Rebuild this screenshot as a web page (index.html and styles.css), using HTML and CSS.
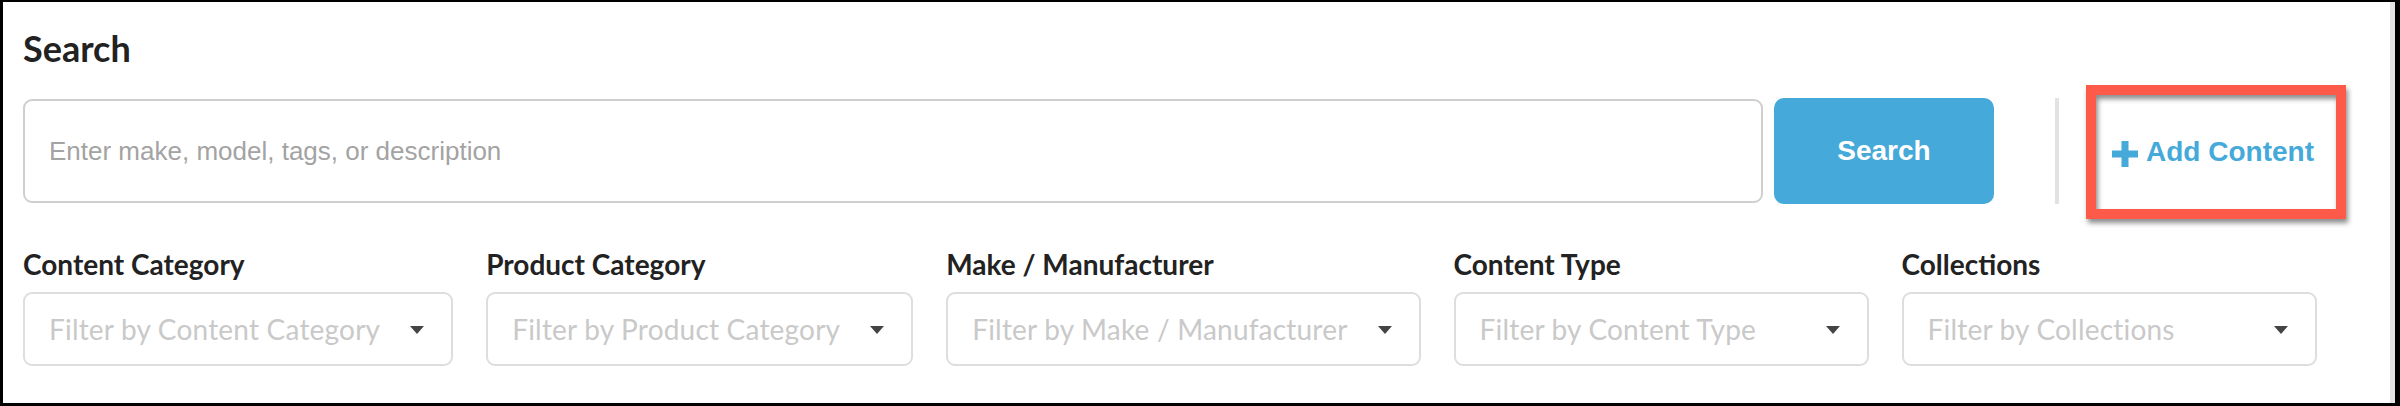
FILE: index.html
```html
<!DOCTYPE html>
<html lang="en">
<head>
  <meta charset="UTF-8" />
  <meta name="viewport" content="width=device-width, initial-scale=1.0" />
  <title>Search</title>
  <link rel="stylesheet" href="styles.css">
</head>
<body>
  <div class="frame">
    <div class="panel">
      <h1>Search</h1>

      <div class="search-row">
        <input type="text" class="search-input" placeholder="Enter make, model, tags, or description" />
        <button type="button" class="search-btn">Search</button>
        <div class="divider"></div>
        <div class="highlight">
          <a href="#" class="add-link">
            <svg class="plus" width="26" height="26" viewBox="0 0 26 26">
              <rect x="9.5" y="0" width="7" height="26" fill="#45a9d9" />
              <rect x="0" y="9.5" width="26" height="7" fill="#45a9d9" />
            </svg>
            <span>Add Content</span>
          </a>
        </div>
      </div>

      <div class="filters">
        <div class="filter">
          <label>Content Category</label>
          <div class="select"><span>Filter by Content Category</span><i class="caret"></i></div>
        </div>
        <div class="filter">
          <label>Product Category</label>
          <div class="select"><span>Filter by Product Category</span><i class="caret"></i></div>
        </div>
        <div class="filter">
          <label>Make / Manufacturer</label>
          <div class="select"><span>Filter by Make / Manufacturer</span><i class="caret"></i></div>
        </div>
        <div class="filter">
          <label>Content Type</label>
          <div class="select"><span>Filter by Content Type</span><i class="caret"></i></div>
        </div>
        <div class="filter">
          <label>Collections</label>
          <div class="select"><span>Filter by Collections</span><i class="caret"></i></div>
        </div>
      </div>
    </div>
  </div>
</body>
</html>
```

FILE: styles.css
```css
* {
  box-sizing: border-box;
}

body {
  margin: 0;
  background-color: #fff;
  font-family: Lato, 'Noto Sans', sans-serif;
  color: #222;
}

.frame {
  height: 406px;
  border: 3px solid #000;
  border-top-width: 2px;
  border-right-width: 5px;
}

.panel {
  height: 100%;
  padding: 25px 44px 0 20px;
  border-right: 5px solid #e4e4e4;
}

h1 {
  margin: 0;
  font-size: 36px;
  line-height: 43px;
  font-weight: bold;
  color: #222;
}

.search-row {
  display: flex;
  align-items: center;
  height: 104px;
  margin-top: 29px;
}

.search-input {
  flex: 1;
  height: 104px;
  padding: 0 24px;
  border: 2px solid #cfcfcf;
  border-radius: 9px;
  font-family: 'Liberation Sans', Arial, sans-serif;
  font-size: 26px;
  color: #333;
  outline: none;
}

.search-input::placeholder {
  color: #a3a3a3;
}

.search-btn {
  width: 220px;
  height: 106px;
  margin-left: 11px;
  border: none;
  border-radius: 10px;
  background-color: #45a9d9;
  color: #fff;
  font-family: 'Liberation Sans', Arial, sans-serif;
  font-size: 28px;
  font-weight: bold;
  cursor: pointer;
}

.divider {
  width: 4px;
  height: 106px;
  margin-left: 61px;
  background-color: #e2e2e2;
}

.highlight {
  display: flex;
  align-items: center;
  width: 260px;
  height: 134px;
  margin-left: 27px;
  margin-top: 2px;
  padding-left: 16px;
  border: 10px solid #fd5a49;
  box-shadow: 2px 4px 5px rgba(0, 0, 0, 0.45), inset 2px 4px 5px rgba(0, 0, 0, 0.45);
}

.add-link {
  display: flex;
  align-items: center;
  gap: 8px;
  color: #45a9d9;
  text-decoration: none;
  font-family: 'Liberation Sans', Arial, sans-serif;
  font-size: 28px;
  font-weight: bold;
}

.plus {
  flex: none;
  margin-top: 3px;
}

.filters {
  display: flex;
  gap: 33px;
  margin-top: 44px;
}

.filter label {
  display: block;
  font-size: 28px;
  line-height: 34px;
  font-weight: bold;
  color: #222;
}

.select {
  display: flex;
  align-items: center;
  justify-content: space-between;
  gap: 30px;
  min-width: 415px;
  height: 74px;
  margin-top: 11px;
  padding: 0 27px 0 24px;
  border: 2px solid #dedede;
  border-radius: 9px;
  font-size: 28px;
  letter-spacing: 0.2px;
  color: #c9c9c9;
  white-space: nowrap;
}

.caret {
  width: 0;
  height: 0;
  border-left: 7px solid transparent;
  border-right: 7px solid transparent;
  border-top: 8px solid #444;
  margin-top: 2px;
}
```
